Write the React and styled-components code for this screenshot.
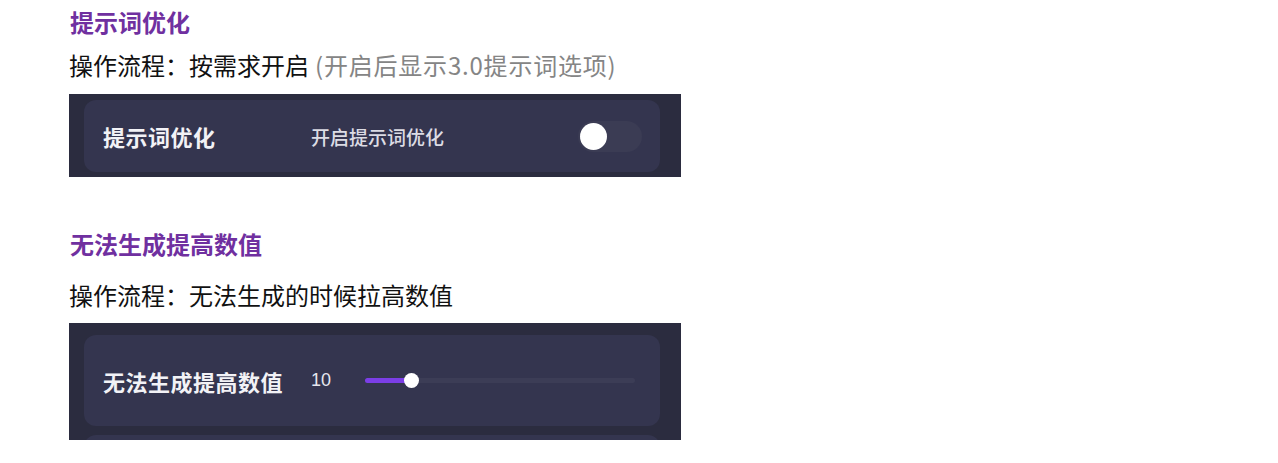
import styled, { createGlobalStyle } from 'styled-components';

const GlobalStyle = createGlobalStyle`
    body {
        margin: 0;
        background: #ffffff;
        font-family: "Noto Sans CJK SC", "Liberation Sans", sans-serif;
    }
`;

const Page = styled.div`
    width: 1278px;
    padding: 5px 0 0 69px;
    box-sizing: border-box;
`;

const Title = styled.h2`
    margin: ${(p) => p.top || 0}px 0 0 1px;
    font-size: 24px;
    line-height: 34px;
    font-weight: 700;
    color: #7030a0;
`;

const Desc = styled.p`
    margin: ${(p) => p.top}px 0 0 0;
    font-size: 24px;
    line-height: 34px;
    color: #111111;
`;

const Note = styled.span`
    color: #858585;
    margin-left: 6px;
    letter-spacing: 0.8px;
`;

const Shot = styled.div`
    margin-top: ${(p) => p.top}px;
    width: 612px;
    height: ${(p) => p.h}px;
    box-sizing: border-box;
    padding: ${(p) => p.pad};
    background: #2b2c3f;
    display: flex;
    flex-direction: column;
    gap: 9px;
    overflow: hidden;
`;

const Card = styled.div`
    flex: 0 0 ${(p) => p.h}px;
    display: flex;
    align-items: center;
    padding: 0 ${(p) => p.right}px 0 19px;
    background: #34354f;
    border-radius: 12px;
`;

const Label = styled.div`
    width: 208px;
    flex: none;
    font-size: 22px;
    font-weight: 700;
    color: #f2f2f6;
    letter-spacing: 0.5px;
`;

const SubLabel = styled.div`
    font-size: 19px;
    font-weight: 500;
    color: #dcdce4;
`;

const Toggle = styled.div`
    margin-left: auto;
    width: 64px;
    height: 31px;
    border-radius: 16px;
    background: #3b3c54;
    display: flex;
    align-items: center;
    padding-left: 2px;
    box-sizing: border-box;
`;

const Knob = styled.div`
    width: ${(p) => p.size}px;
    height: ${(p) => p.size}px;
    border-radius: 50%;
    background: #ffffff;
    flex: none;
`;

const Value = styled.div`
    width: 54px;
    flex: none;
    font-family: "Liberation Sans", sans-serif;
    font-size: 18px;
    color: #e6e6ee;
`;

const Track = styled.div`
    flex: 1;
    height: 5px;
    border-radius: 3px;
    background: #3c3d56;
    display: flex;
    align-items: center;
`;

const Fill = styled.div`
    height: 5px;
    border-radius: 3px 0 0 3px;
    background: #7b3ee6;
    display: flex;
    align-items: center;
    justify-content: flex-end;
    & > div {
        margin-right: -7px;
    }
`;

const App = () => {
    const value = 10;
    const max = 58;

    return (
        <Page>
            <GlobalStyle />
            <Title>提示词优化</Title>
            <Desc top={9}>
                操作流程：按需求开启<Note>(开启后显示3.0提示词选项)</Note>
            </Desc>
            <Shot top={12} h={83} pad="6px 21px 5px 15px">
                <Card h={72} right={18}>
                    <Label>提示词优化</Label>
                    <SubLabel>开启提示词优化</SubLabel>
                    <Toggle>
                        <Knob size={27} />
                    </Toggle>
                </Card>
            </Shot>

            <Title top={50}>无法生成提高数值</Title>
            <Desc top={17}>操作流程：无法生成的时候拉高数值</Desc>
            <Shot top={11} h={117} pad="12px 21px 0 15px">
                <Card h={91} right={25}>
                    <Label>无法生成提高数值</Label>
                    <Value>{value}</Value>
                    <Track>
                        <Fill style={{ width: `${(value / max) * 100}%` }}>
                            <Knob size={15} />
                        </Fill>
                    </Track>
                </Card>
                <Card h={40} right={25} />
            </Shot>
        </Page>
    );
};

export default App;
